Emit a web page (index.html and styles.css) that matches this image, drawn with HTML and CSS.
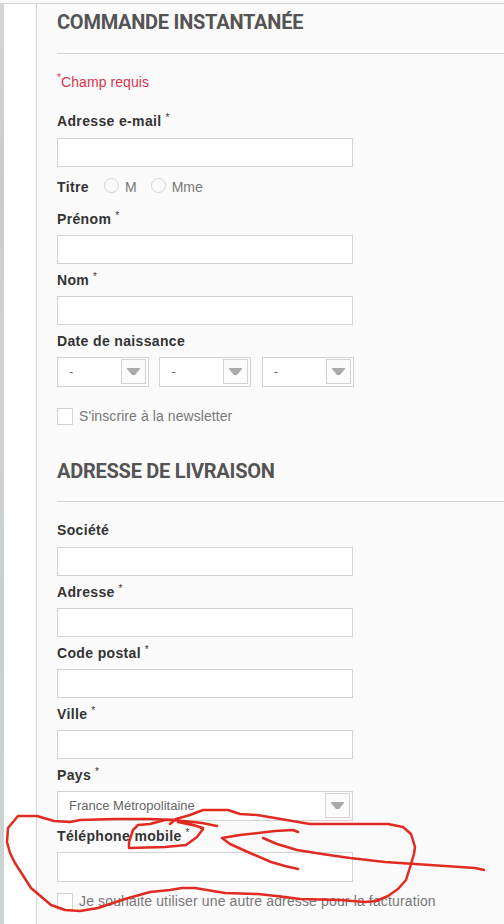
FILE: index.html
```
<!DOCTYPE html>
<html lang="fr">
<head>
  <meta charset="utf-8">
  <title>Commande instantanée</title>
  <link rel="stylesheet" href="styles.css">
</head>
<body>

  <div class="topbar"></div>

  <div class="page">
    <div class="edge"></div>
    <form class="content">
      <h3 class="title">COMMANDE INSTANTANÉE</h3>
      <p class="note"><sup>*</sup>Champ requis</p>

      <label class="label email" for="email"><span>Adresse e-mail</span> <sup>*</sup></label>
      <input class="field" type="text" id="email">

      <div class="gender">
        <span class="gender-title">Titre</span>
        <label class="choice"><input class="radio" type="radio" name="gender">M</label>
        <label class="choice"><input class="radio" type="radio" name="gender">Mme</label>
      </div>

      <label class="label" for="firstname"><span>Prénom</span> <sup>*</sup></label>
      <input class="field" type="text" id="firstname">

      <label class="label" for="lastname"><span>Nom</span> <sup>*</sup></label>
      <input class="field" type="text" id="lastname">

      <div class="label"><span>Date de naissance</span></div>
      <div class="birth">
        <div class="select"><span>-</span><span class="arrow"><svg width="13" height="7"><path d="M0 0h13v1L8 7H5L0 1z"/></svg></span></div>
        <div class="select"><span>-</span><span class="arrow"><svg width="13" height="7"><path d="M0 0h13v1L8 7H5L0 1z"/></svg></span></div>
        <div class="select"><span>-</span><span class="arrow"><svg width="13" height="7"><path d="M0 0h13v1L8 7H5L0 1z"/></svg></span></div>
      </div>

      <label class="check newsletter"><input class="box" type="checkbox"><span>S'inscrire à la newsletter</span></label>

      <h3 class="title delivery">ADRESSE DE LIVRAISON</h3>

      <label class="label first" for="company"><span>Société</span></label>
      <input class="field" type="text" id="company">

      <label class="label" for="address"><span>Adresse</span> <sup>*</sup></label>
      <input class="field" type="text" id="address">

      <label class="label" for="postcode"><span>Code postal</span> <sup>*</sup></label>
      <input class="field" type="text" id="postcode">

      <label class="label" for="city"><span>Ville</span> <sup>*</sup></label>
      <input class="field" type="text" id="city">

      <div class="label"><span>Pays</span> <sup>*</sup></div>
      <div class="select country"><span>France Métropolitaine</span><span class="arrow"><svg width="13" height="7"><path d="M0 0h13v1L8 7H5L0 1z"/></svg></span></div>

      <label class="label phone" for="mobile"><span>Téléphone mobile</span> <sup>*</sup></label>
      <input class="field tall" type="text" id="mobile">

      <label class="check invoice"><input class="box" type="checkbox"><span>Je souhaite utiliser une autre adresse pour la facturation</span></label>
    </form>
  </div>

  <!-- hand-drawn marks around the mobile phone field -->
  <svg class="marks" width="504" height="924" viewBox="0 0 504 924">
    <path d="M217 826L202 823L175 820L150 819L115 819L80 820L70 822L54 821L37 816L18 816L8 828L7 842L10 853L15 863L31 888L51 905L65 910L80 911L98 908L125 899L150 892L170 890L182 888L195 888L225 893L258 894L285 897L300 899L340 900L365 902L376 901L388 896L398 889L406 880L411 864L414 854L415 847L411 834L403 827L388 824L310 824L298 822L275 818L257 815L240 814L228 810L203 810L190 815L176 819L170 824"/>
    <path d="M203 828L190 824L177 820L165 820L150 824L138 825L133 830L129 842L129 848L165 847L186 845L197 837L203 829L197 826L178 822"/>
    <path d="M298 832L293 830L275 831L240 835L222 838L230 844L250 853L271 862L285 866L298 869"/>
    <path d="M263 838L277 844L297 850L322 854L350 858L385 862L430 865L475 868L484 870"/>
  </svg>

</body>
</html>
```
FILE: styles.css
```
* {
  box-sizing: border-box;
}

body {
  margin: 0;
  height: 924px;
  overflow: hidden;
  background: #fff;
  color: #777;
  font-family: "Liberation Sans", Arial, sans-serif;
  font-size: 14px;
}

.topbar {
  height: 4px;
  background: #fafafa;
  border-bottom: 1px solid #d3d3d5;
}

.page {
  display: flex;
  height: 920px;
}

.edge {
  width: 4px;
  margin-right: 32px;
  background: linear-gradient(#d6d6d6, #cbcbcb 20%, #d2d4d4 40%, #c8d0ce 65%, #cdd5d3);
}

.content {
  flex: 1;
  padding-left: 20px;
  background: #fbfbfb;
  border-left: 1px solid #d3d3d3;
}

.title {
  height: 50px;
  margin: 0;
  border-bottom: 1px solid #d6d4d4;
  color: #555454;
  font: bold 20px/37px Roboto, sans-serif;
  letter-spacing: -0.25px;
}

.delivery {
  line-height: 38px;
}

.note {
  height: 52px;
  margin: 0;
  padding-top: 12px;
  color: #d9344c;
  line-height: 32px;
  letter-spacing: 0.08px;
}

sup {
  font-size: 10px;
  line-height: 0;
  vertical-align: 5px;
}

.note sup {
  vertical-align: 6px;
}

.label {
  display: block;
  height: 32px;
  color: #333;
  line-height: 32px;
  white-space: nowrap;
}

.label span,
.gender-title {
  color: #333;
  font-weight: bold;
  letter-spacing: 0.35px;
}

.field {
  display: block;
  width: 296px;
  height: 29px;
  margin: 0;
  padding: 0 10px;
  background: #fff;
  border: 1px solid #d3d3d3;
}

.tall {
  height: 30px;
}

.gender {
  display: flex;
  height: 36px;
  line-height: 41px;
}

.gender-title {
  width: 47px;
}

.choice {
  display: flex;
  margin-right: 14px;
}

.radio {
  appearance: none;
  width: 15px;
  height: 15px;
  margin: 11px 6px 0 0;
  background: #fbfbfb;
  border: 1px solid #d3d3d3;
  border-radius: 50%;
}

.birth {
  display: flex;
  gap: 10.4px;
}

.select {
  display: flex;
  justify-content: space-between;
  width: 92px;
  height: 30px;
  padding: 1px 2px 0 11px;
  background: #fff;
  border: 1px solid #d3d3d3;
  color: #666;
  font-size: 13px;
  line-height: 26px;
}

.country {
  width: 296px;
}

.arrow {
  display: flex;
  align-items: center;
  justify-content: center;
  width: 25px;
  height: 25px;
  background: #fbfbfb;
  border: 1px solid #d3d3d3;
}

.arrow path {
  fill: #aaa;
}

.check {
  display: flex;
  align-items: center;
  height: 17px;
  line-height: 15px;
  white-space: nowrap;
  letter-spacing: 0.08px;
}

.box {
  appearance: none;
  width: 16px;
  height: 17px;
  margin: 0 6px 0 0;
  background: #fff;
  border: 1px solid #d3d3d3;
}

.newsletter {
  margin: 21px 0 27px;
}

.email,
.first {
  line-height: 30px;
}

.first {
  margin-top: 13px;
}

.phone {
  height: 31px;
  line-height: 30px;
}

.invoice {
  margin-top: 11px;
  letter-spacing: 0.14px;
}

.marks {
  position: absolute;
  top: 0;
  left: 0;
  pointer-events: none;
}

.marks path {
  fill: none;
  stroke: #e12a22;
  stroke-width: 2.5;
  stroke-linecap: round;
  stroke-linejoin: round;
}
```
